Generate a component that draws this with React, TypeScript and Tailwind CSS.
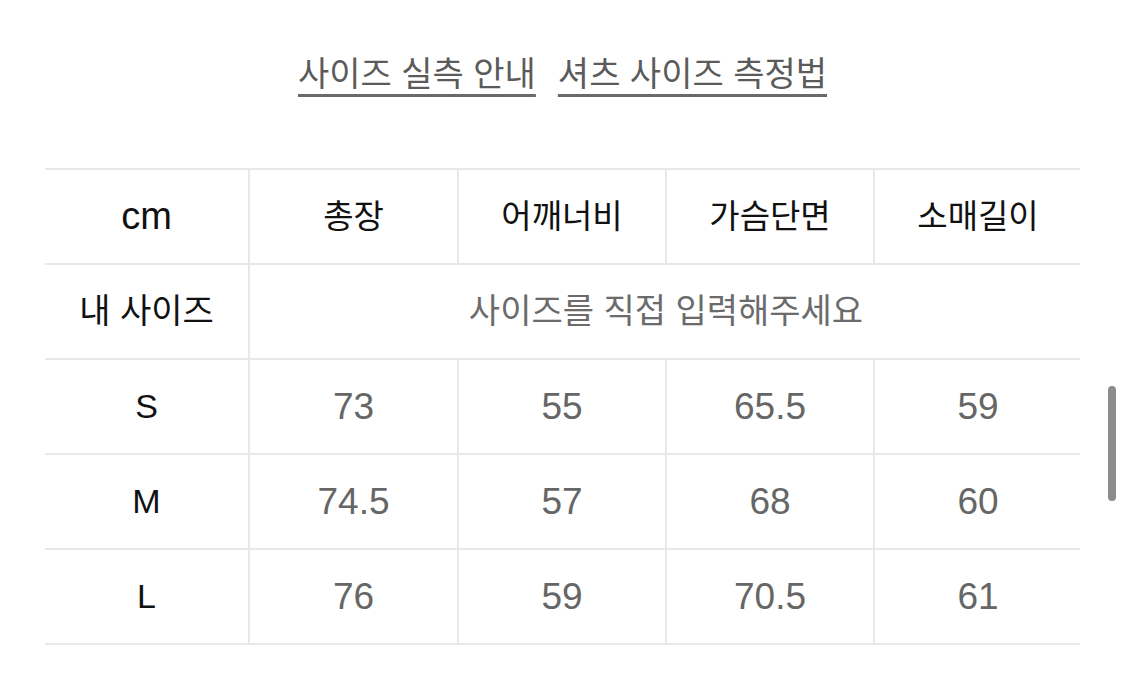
import React from "react";

const font = { fontFamily: '"Liberation Sans", "Noto Sans CJK KR", sans-serif' };

const headers = ["총장", "어깨너비", "가슴단면", "소매길이"];

const rows = [
  { size: "S", values: ["73", "55", "65.5", "59"] },
  { size: "M", values: ["74.5", "57", "68", "60"] },
  { size: "L", values: ["76", "59", "70.5", "61"] },
];

export default function App() {
  return (
    <div
      className="relative w-[1125px] h-[697px] bg-white overflow-hidden font-['Liberation_Sans','Noto_Sans_CJK_KR',sans-serif]"
      style={font}
    >
      {/* Guide links */}
      <div className="flex justify-center gap-[22px] pt-[50px] text-[34px] text-[#5b5b5b] leading-[48px]">
        <a className="underline decoration-[3px] underline-offset-[8px] decoration-[#6a6a6a]">사이즈 실측 안내</a>
        <a className="underline decoration-[3px] underline-offset-[8px] decoration-[#6a6a6a]">셔츠 사이즈 측정법</a>
      </div>

      {/* Size table */}
      <div className="ml-[45px] mt-[70px] w-[1035px] overflow-hidden">
        <table className="border-collapse table-fixed w-[1037px]">
          <colgroup>
            <col className="w-[204px]" />
            <col className="w-[209px]" />
            <col className="w-[208px]" />
            <col className="w-[208px]" />
            <col className="w-[208px]" />
          </colgroup>
          <tbody>
            <tr className="h-[95px]">
              <td className="border-y-2 border-[#e8e8e8] text-center text-[38px] text-[#111]">cm</td>
              {headers.map((h) => (
                <td
                  key={h}
                  className="border-2 border-[#e8e8e8] text-center text-[33px] text-[#111]"
                >
                  {h}
                </td>
              ))}
            </tr>
            <tr className="h-[95px]">
              <td className="border-y-2 border-[#e8e8e8] text-center text-[34px] text-[#111]">내 사이즈</td>
              <td
                colSpan={4}
                className="border-y-2 border-l-2 border-[#e8e8e8] text-center text-[34px] text-[#6b6b6b]"
              >
                사이즈를 직접 입력해주세요
              </td>
            </tr>
            {rows.map((r) => (
              <tr key={r.size} className="h-[95px]">
                <td className="border-y-2 border-[#e8e8e8] text-center text-[34px] text-[#111]">{r.size}</td>
                {r.values.map((v, i) => (
                  <td key={i} className="border-2 border-[#e8e8e8] text-center text-[37px] text-[#666]">
                    {v}
                  </td>
                ))}
              </tr>
            ))}
          </tbody>
        </table>
      </div>

      {/* overlay scrollbar */}
      <div className="absolute left-[1108px] top-[386px] w-[8px] h-[115px] rounded-full bg-[#8c8c8c]" />
    </div>
  );
}
